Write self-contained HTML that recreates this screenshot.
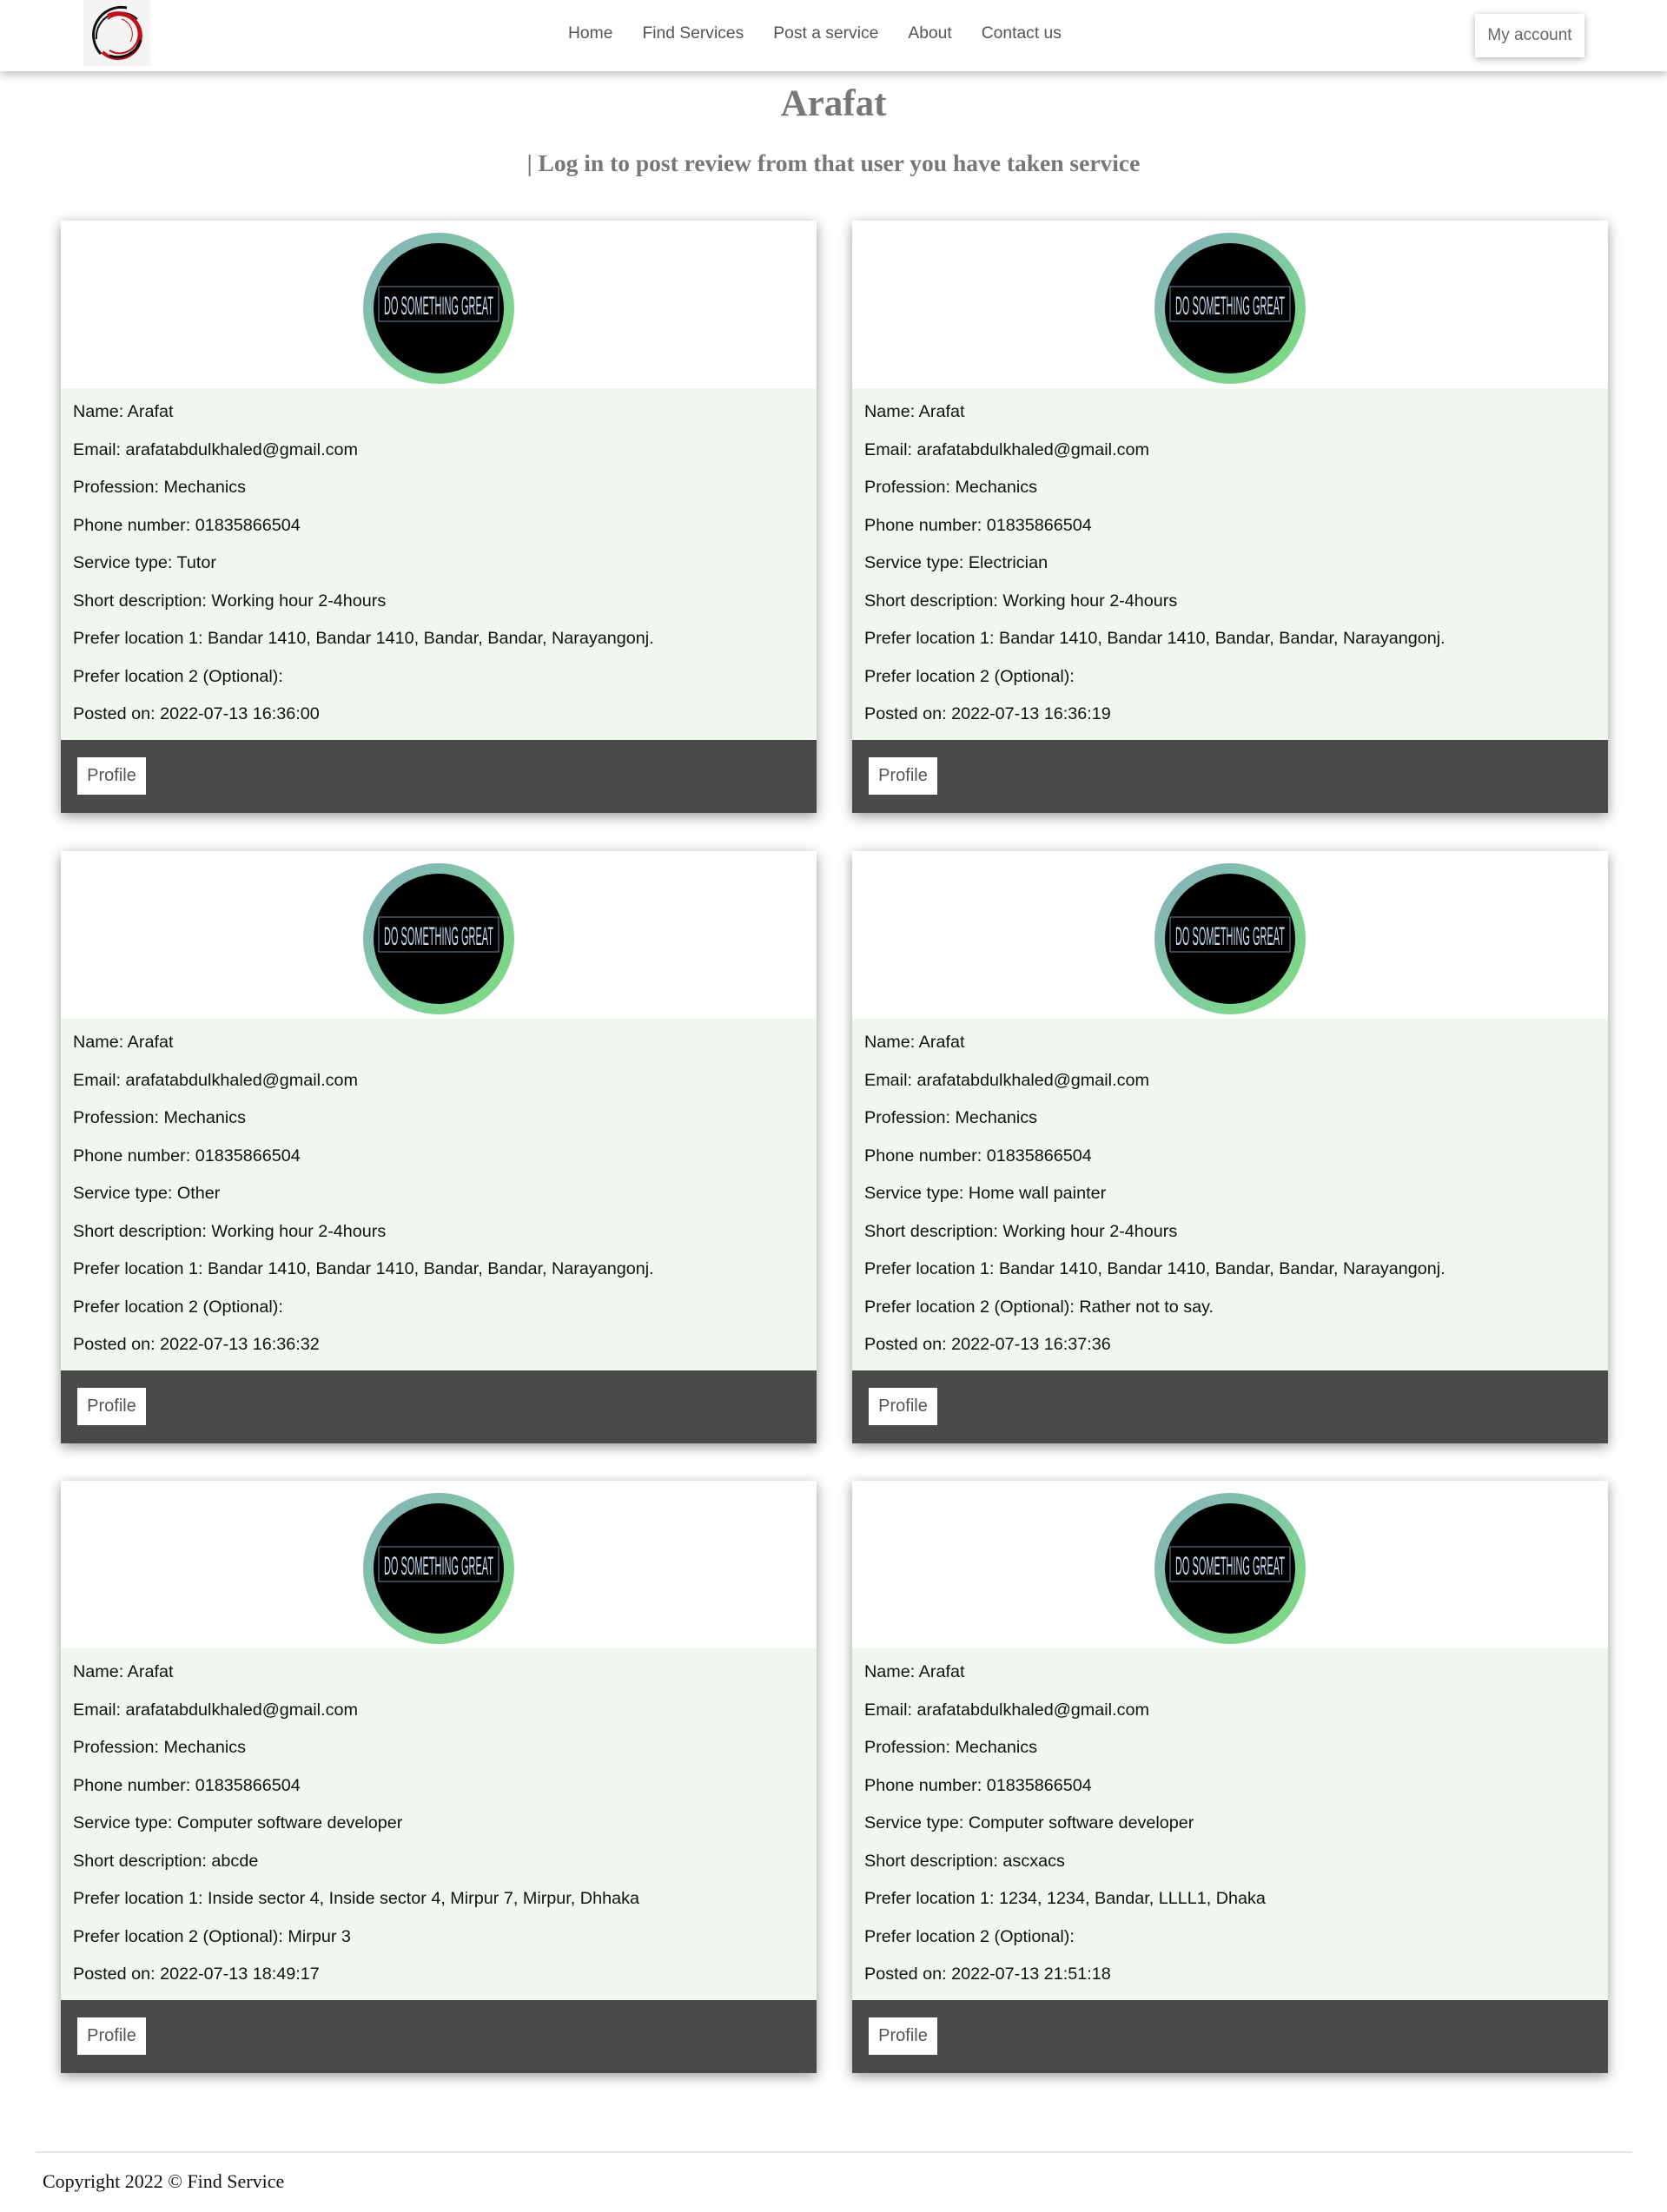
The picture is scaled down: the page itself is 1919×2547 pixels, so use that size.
<!DOCTYPE html>
<html><head><meta charset="utf-8">
<style>
*{box-sizing:border-box;margin:0;padding:0}
html,body{width:1919px;height:2547px;background:#fff;overflow:hidden;font-family:"Liberation Sans",Arial,sans-serif}
.nav{position:absolute;left:0;top:0;width:1919px;height:82px;background:#fff;box-shadow:0 4px 10px rgba(0,0,0,.25)}
.logo{position:absolute;left:96px;top:0;width:77px;height:76px;background:#f4f4f4}
.links{position:absolute;left:654px;top:28px;font-size:19.3px;color:#555;white-space:nowrap}
.links span{margin-right:34px}
.acct{position:absolute;left:1698px;top:16px;width:126px;height:50px;background:#fff;box-shadow:0 2px 8px rgba(0,0,0,.3);font-size:19px;color:#666;text-align:center;line-height:50px}
h1{position:absolute;left:0;width:1919px;top:95px;text-align:center;font:bold 43px "Liberation Serif",serif;color:#777}
h2{position:absolute;left:0;width:1919px;top:172px;text-align:center;font:bold 27.5px "Liberation Serif",serif;color:#777}
.card{position:absolute;width:870px;height:682px;box-shadow:0 4px 14px rgba(0,0,0,.4);background:#fff}
.top{height:193px;position:relative}
.ring{position:absolute;left:348px;top:14px;width:174px;height:174px;border-radius:50%;background:linear-gradient(135deg,#86aebc,#7fcf9c 60%,#7edc78)}
.img{position:absolute;left:12px;top:12px;width:150px;height:150px;border-radius:50%;background:#000;overflow:hidden}
.body{height:405px;background:#f0f7ef;padding:6px 14px 0;font-size:19.8px;color:#111}
.body p{line-height:43.5px;white-space:nowrap}
.foot{height:84px;background:#4a4a4a;position:relative}
.btn{position:absolute;left:19px;top:20px;width:79px;height:43px;background:#fff;color:#555;font-size:20px;text-align:center;line-height:43px}
hr{position:absolute;left:41px;top:2477px;width:1838px;border:0;border-top:2px solid #e4e4ea}
.copy{position:absolute;left:49px;top:2499px;font:22px "Liberation Serif",serif;color:#111}
</style></head><body>
<div class="nav">
<div class="logo"><svg width="77" height="76" viewBox="0 0 77 76" fill="none"><path d="M20 62 A32 32 0 0 1 50 9" stroke="#111" stroke-width="3"/><path d="M15 45 A28 28 0 0 1 62 22" stroke="#111" stroke-width="2"/><path d="M22 60 A26 26 0 1 0 28 18" stroke="#c0101a" stroke-width="4"/><path d="M30 64 A28 28 0 0 0 66 46" stroke="#111" stroke-width="3"/><path d="M28 22 A22 22 0 1 1 30 58" stroke="#c0101a" stroke-width="2"/><path d="M44 22 A18 18 0 0 1 54 48" stroke="#c0101a" stroke-width="1"/></svg></div>
<div class="links"><span>Home</span><span>Find Services</span><span>Post a service</span><span>About</span><span>Contact us</span></div>
<div class="acct">My account</div>
</div>
<h1>Arafat</h1>
<h2>| Log in to post review from that user you have taken service</h2>
<div class="card" style="left:70px;top:254px"><div class="top"><div class="ring"><div class="img"><svg width="150" height="150"><rect x="6" y="50" width="138" height="40" fill="none" stroke="#6d8aa0" stroke-width="1"/><text x="75" y="82" text-anchor="middle" font-family="Liberation Sans,sans-serif" font-size="30" fill="#c8dcf0" textLength="126" lengthAdjust="spacingAndGlyphs">DO SOMETHING GREAT</text></svg></div></div></div><div class="body"><p>Name: Arafat</p><p>Email: arafatabdulkhaled@gmail.com</p><p>Profession: Mechanics</p><p>Phone number: 01835866504</p><p>Service type: Tutor</p><p>Short description: Working hour 2-4hours</p><p>Prefer location 1: Bandar 1410, Bandar 1410, Bandar, Bandar, Narayangonj.</p><p>Prefer location 2 (Optional):</p><p>Posted on: 2022-07-13 16:36:00</p></div><div class="foot"><div class="btn">Profile</div></div></div>
<div class="card" style="left:981px;top:254px"><div class="top"><div class="ring"><div class="img"><svg width="150" height="150"><rect x="6" y="50" width="138" height="40" fill="none" stroke="#6d8aa0" stroke-width="1"/><text x="75" y="82" text-anchor="middle" font-family="Liberation Sans,sans-serif" font-size="30" fill="#c8dcf0" textLength="126" lengthAdjust="spacingAndGlyphs">DO SOMETHING GREAT</text></svg></div></div></div><div class="body"><p>Name: Arafat</p><p>Email: arafatabdulkhaled@gmail.com</p><p>Profession: Mechanics</p><p>Phone number: 01835866504</p><p>Service type: Electrician</p><p>Short description: Working hour 2-4hours</p><p>Prefer location 1: Bandar 1410, Bandar 1410, Bandar, Bandar, Narayangonj.</p><p>Prefer location 2 (Optional):</p><p>Posted on: 2022-07-13 16:36:19</p></div><div class="foot"><div class="btn">Profile</div></div></div>
<div class="card" style="left:70px;top:980px"><div class="top"><div class="ring"><div class="img"><svg width="150" height="150"><rect x="6" y="50" width="138" height="40" fill="none" stroke="#6d8aa0" stroke-width="1"/><text x="75" y="82" text-anchor="middle" font-family="Liberation Sans,sans-serif" font-size="30" fill="#c8dcf0" textLength="126" lengthAdjust="spacingAndGlyphs">DO SOMETHING GREAT</text></svg></div></div></div><div class="body"><p>Name: Arafat</p><p>Email: arafatabdulkhaled@gmail.com</p><p>Profession: Mechanics</p><p>Phone number: 01835866504</p><p>Service type: Other</p><p>Short description: Working hour 2-4hours</p><p>Prefer location 1: Bandar 1410, Bandar 1410, Bandar, Bandar, Narayangonj.</p><p>Prefer location 2 (Optional):</p><p>Posted on: 2022-07-13 16:36:32</p></div><div class="foot"><div class="btn">Profile</div></div></div>
<div class="card" style="left:981px;top:980px"><div class="top"><div class="ring"><div class="img"><svg width="150" height="150"><rect x="6" y="50" width="138" height="40" fill="none" stroke="#6d8aa0" stroke-width="1"/><text x="75" y="82" text-anchor="middle" font-family="Liberation Sans,sans-serif" font-size="30" fill="#c8dcf0" textLength="126" lengthAdjust="spacingAndGlyphs">DO SOMETHING GREAT</text></svg></div></div></div><div class="body"><p>Name: Arafat</p><p>Email: arafatabdulkhaled@gmail.com</p><p>Profession: Mechanics</p><p>Phone number: 01835866504</p><p>Service type: Home wall painter</p><p>Short description: Working hour 2-4hours</p><p>Prefer location 1: Bandar 1410, Bandar 1410, Bandar, Bandar, Narayangonj.</p><p>Prefer location 2 (Optional): Rather not to say.</p><p>Posted on: 2022-07-13 16:37:36</p></div><div class="foot"><div class="btn">Profile</div></div></div>
<div class="card" style="left:70px;top:1705px"><div class="top"><div class="ring"><div class="img"><svg width="150" height="150"><rect x="6" y="50" width="138" height="40" fill="none" stroke="#6d8aa0" stroke-width="1"/><text x="75" y="82" text-anchor="middle" font-family="Liberation Sans,sans-serif" font-size="30" fill="#c8dcf0" textLength="126" lengthAdjust="spacingAndGlyphs">DO SOMETHING GREAT</text></svg></div></div></div><div class="body"><p>Name: Arafat</p><p>Email: arafatabdulkhaled@gmail.com</p><p>Profession: Mechanics</p><p>Phone number: 01835866504</p><p>Service type: Computer software developer</p><p>Short description: abcde</p><p>Prefer location 1: Inside sector 4, Inside sector 4, Mirpur 7, Mirpur, Dhhaka</p><p>Prefer location 2 (Optional): Mirpur 3</p><p>Posted on: 2022-07-13 18:49:17</p></div><div class="foot"><div class="btn">Profile</div></div></div>
<div class="card" style="left:981px;top:1705px"><div class="top"><div class="ring"><div class="img"><svg width="150" height="150"><rect x="6" y="50" width="138" height="40" fill="none" stroke="#6d8aa0" stroke-width="1"/><text x="75" y="82" text-anchor="middle" font-family="Liberation Sans,sans-serif" font-size="30" fill="#c8dcf0" textLength="126" lengthAdjust="spacingAndGlyphs">DO SOMETHING GREAT</text></svg></div></div></div><div class="body"><p>Name: Arafat</p><p>Email: arafatabdulkhaled@gmail.com</p><p>Profession: Mechanics</p><p>Phone number: 01835866504</p><p>Service type: Computer software developer</p><p>Short description: ascxacs</p><p>Prefer location 1: 1234, 1234, Bandar, LLLL1, Dhaka</p><p>Prefer location 2 (Optional):</p><p>Posted on: 2022-07-13 21:51:18</p></div><div class="foot"><div class="btn">Profile</div></div></div>
<hr>
<div class="copy">Copyright 2022 © Find Service</div>
</body></html>
